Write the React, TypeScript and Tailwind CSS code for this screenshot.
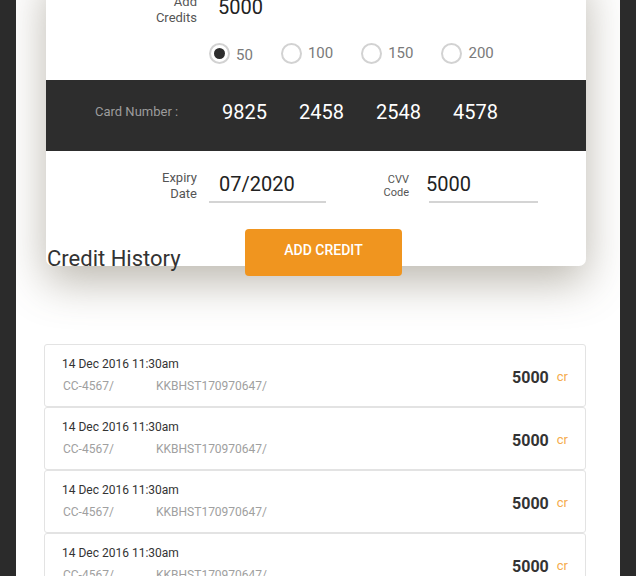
import React from 'react';

const history = [1, 2, 3, 4].map((i) => ({
  id: i,
  date: '14 Dec 2016 11:30am',
  card: 'CC-4567/',
  ref: 'KKBHST170970647/',
  amount: 5000,
}));

const amounts = [50, 100, 150, 200];

function Radio({ label, checked }: { label: number; checked?: boolean }) {
  return (
    <div className="flex items-center gap-[6px] h-[22px]">
      <span className="w-[21px] h-[21px] rounded-full border-2 border-[#d2d2d2] flex items-center justify-center">
        {checked && <span className="w-[11px] h-[11px] rounded-full bg-[#2d2d2d]" />}
      </span>
      <span className={`text-[15px] leading-[20px] text-[#7a7a7a] ${checked ? 'mt-[3px]' : ''}`}>{label}</span>
    </div>
  );
}

export default function App() {
  return (
    <div className="h-[576px] overflow-hidden bg-[#2b2b2b] px-[16px] font-['Roboto',sans-serif]">
      <div className="h-full bg-white w-[604px] overflow-hidden">
        {/* card, top part scrolled out of view */}
        <div className="ml-[30px] w-[540px] -mt-[30px] pt-[24px] flex flex-col bg-white rounded-b-[7px] shadow-[0_16px_44px_rgba(95,85,65,0.42)] relative">
          <div className="flex items-start">
            <div className="w-[151px] text-right text-[13px] leading-[16px] text-[#555]">
              Add<br />Credits
            </div>
            <div className="ml-[12px] pl-[9px] text-[20px] leading-[20px] text-[#222] mt-[3px]">5000</div>
          </div>

          <div className="mt-[16px] flex items-center gap-[28px] pl-[163px]">
            {amounts.map((a, i) => (
              <Radio key={a} label={a} checked={i === 0} />
            ))}
          </div>

          <div className="mt-[16px] h-[71px] bg-[#2d2d2d] flex items-center pl-[49px] pb-[7px]">
            <span className="text-[13px] text-[#9c9c9c] w-[127px]">Card Number :</span>
            <div className="flex gap-[32px] text-[20px] text-white">
              <span>9825</span>
              <span>2458</span>
              <span>2548</span>
              <span>4578</span>
            </div>
          </div>

          <div className="mt-[18px] flex items-center">
            <div className="w-[151px] text-right text-[13px] leading-[16px] text-[#555]">
              Expiry<br />Date
            </div>
            <div className="ml-[12px] w-[117px] h-[34px] border-b-2 border-[#d4d4d4] pl-[10px] text-[20px] leading-[30px] text-[#222]">
              07/2020
            </div>
            <div className="ml-[56px] w-[27px] text-right text-[11px] leading-[13px] text-[#555]">
              CVV<br />Code
            </div>
            <div className="ml-[20px] w-[109px] h-[34px] border-b-2 border-[#d4d4d4] text-[20px] leading-[30px] text-[#222]">
              <span className="-ml-[3px]">5000</span>
            </div>
          </div>

          <div className="mt-[26px] -mb-[10px] flex items-center relative">
            <h2 className="w-[199px] pl-[1px] mt-[12px] text-[22px] leading-[26px] text-[#333]">Credit History</h2>
            <button className="w-[157px] h-[47px] rounded-[4px] bg-[#f0951f] text-white text-[14px] font-medium pb-[5px]">
              ADD CREDIT
            </button>
          </div>
        </div>

        {/* history list */}
        <div className="mt-[78px] ml-[28px] w-[542px]">
          {history.map((h) => (
            <div
              key={h.id}
              className="h-[63px] border border-[#e3e3e3] rounded-[3px] flex items-center pl-[17px] pr-[17px]"
            >
              <div className="flex-1 -mt-[2px]">
                <div className="text-[12px] leading-[14px] text-[#333]">{h.date}</div>
                <div className="mt-[8px] flex text-[12px] leading-[14px] text-[#a0a0a0]">
                  <span className="w-[94px] pl-[1px]">{h.card}</span>
                  <span>{h.ref}</span>
                </div>
              </div>
              <div className="flex items-baseline gap-[8px] pt-[4px]">
                <span className="text-[16px] font-bold text-[#333]">{h.amount}</span>
                <span className="text-[13px] text-[#f5ab4c] -translate-y-[2px]">cr</span>
              </div>
            </div>
          ))}
        </div>
      </div>
    </div>
  );
}
